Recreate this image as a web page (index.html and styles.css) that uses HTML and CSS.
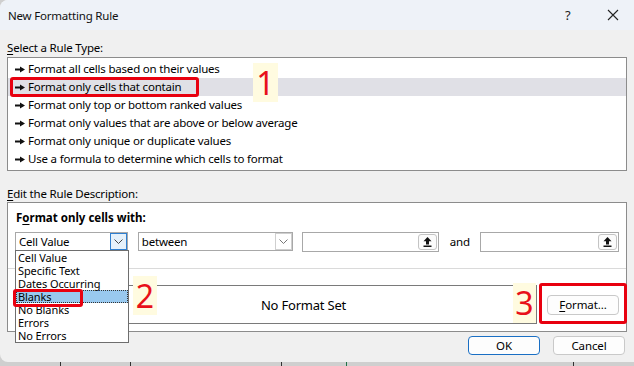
FILE: index.html
```html
<!DOCTYPE html>
<html lang="en">
<head>
  <meta charset="UTF-8" />
  <title>New Formatting Rule</title>
  <link rel="stylesheet" href="styles.css">
</head>
<body>
  <div class="dialog">
    <div class="titlebar">
      <span class="title">New Formatting Rule</span>
      <span class="help">?</span>
      <span class="close">
        <svg width="12" height="12" viewBox="0 0 12 12"><path d="M1 1L11 11M11 1L1 11" stroke="#222" stroke-width="1.1" fill="none"/></svg>
      </span>
    </div>

    <div class="body">
      <div class="section-label"><u>S</u>elect a Rule Type:</div>
      <ul class="rule-list">
        <li><svg class="bullet" viewBox="0 0 10 7"><path d="M0 2.5h5V0.5l5 3-5 3V4.5H0z"/></svg>Format all cells based on their values</li>
        <li class="selected"><svg class="bullet" viewBox="0 0 10 7"><path d="M0 2.5h5V0.5l5 3-5 3V4.5H0z"/></svg>Format only cells that contain</li>
        <li><svg class="bullet" viewBox="0 0 10 7"><path d="M0 2.5h5V0.5l5 3-5 3V4.5H0z"/></svg>Format only top or bottom ranked values</li>
        <li><svg class="bullet" viewBox="0 0 10 7"><path d="M0 2.5h5V0.5l5 3-5 3V4.5H0z"/></svg>Format only values that are above or below average</li>
        <li><svg class="bullet" viewBox="0 0 10 7"><path d="M0 2.5h5V0.5l5 3-5 3V4.5H0z"/></svg>Format only unique or duplicate values</li>
        <li><svg class="bullet" viewBox="0 0 10 7"><path d="M0 2.5h5V0.5l5 3-5 3V4.5H0z"/></svg>Use a formula to determine which cells to format</li>
      </ul>

      <div class="section-label second"><u>E</u>dit the Rule Description:</div>
      <div class="desc">
        <div class="desc-top">
          <div class="desc-heading">F<u>o</u>rmat only cells with:</div>
          <div class="controls">
            <div class="combo combo-type">
              <span class="combo-text">Cell Value</span>
              <span class="drop focused"><svg width="9" height="5" viewBox="0 0 9 5"><path d="M0.5 0.5L4.5 4.5L8.5 0.5" stroke="#444" fill="none"/></svg></span>
            </div>
            <div class="combo combo-op">
              <span class="combo-text">between</span>
              <span class="drop"><svg width="9" height="5" viewBox="0 0 9 5"><path d="M0.5 0.5L4.5 4.5L8.5 0.5" stroke="#777" fill="none"/></svg></span>
            </div>
            <div class="ref-box ref-first">
              <span class="ref-btn"><svg width="9" height="10" viewBox="0 0 9 10"><path d="M4.5 0L8.5 4.2H6V7.4H3V4.2H0.5Z M0.5 8.6h8v1.4h-8z" fill="#111"/></svg></span>
            </div>
            <span class="and">and</span>
            <div class="ref-box ref-second">
              <span class="ref-btn"><svg width="9" height="10" viewBox="0 0 9 10"><path d="M4.5 0L8.5 4.2H6V7.4H3V4.2H0.5Z M0.5 8.6h8v1.4h-8z" fill="#111"/></svg></span>
            </div>
          </div>
        </div>
        <div class="desc-bottom">
          <span class="preview-label">Preview:</span>
          <div class="preview">No Format Set</div>
          <button class="btn format-btn"><u>F</u>ormat...</button>
        </div>
      </div>

      <div class="footer">
        <button class="btn ok-btn">OK</button>
        <button class="btn cancel-btn">Cancel</button>
      </div>
    </div>
  </div>
  <div class="sheet">
    <span class="tick t1"></span>
    <span class="tick t2"></span>
    <span class="tick t3"></span>
    <span class="tick t4 green"></span>
    <span class="tick t5"></span>
  </div>

  <ul class="dropdown">
    <li>Cell Value</li>
    <li>Specific Text</li>
    <li>Dates Occurring</li>
    <li class="hover">Blanks</li>
    <li>No Blanks</li>
    <li>Errors</li>
    <li>No Errors</li>
  </ul>

  <div class="mark mark-1"></div>
  <div class="mark mark-2"></div>
  <div class="mark mark-3"></div>
  <div class="step step-1">1</div>
  <div class="step step-2">2</div>
  <div class="step step-3">3</div>
</body>
</html>
```

FILE: styles.css
```css
body {
  margin: 0;
  width: 634px;
  height: 366px;
  overflow: hidden;
  background-color: #cfcfcf;
  font-family: 'Noto Sans', sans-serif;
  font-size: 11.5px;
  letter-spacing: -0.2px;
  color: #000;
  position: relative;
}

u {
  text-decoration-thickness: 1px;
  text-underline-offset: 2px;
}

.dialog {
  width: 634px;
  height: 362px;
  background-color: #f0f0f0;
  border-radius: 8px 0 0 8px;
  overflow: hidden;
}

.titlebar {
  height: 30px;
  background-color: #eef2f8;
  display: flex;
  align-items: center;
  padding-left: 8px;
}

.title {
  flex: 1;
  color: #111;
}

.help {
  width: 20px;
  font-size: 13px;
  color: #222;
  margin-right: 22px;
}

.close {
  width: 12px;
  height: 12px;
  margin-right: 15px;
}

.body {
  padding: 0 7px;
}

.section-label {
  padding-top: 10px;
  padding-bottom: 1px;
  line-height: 16px;
}

.section-label.second {
  padding-top: 15px;
  padding-bottom: 0;
}

.rule-list {
  list-style: none;
  margin: 0;
  padding: 2px 0 0 0;
  background-color: #fff;
  border: 1px solid #8c8c8c;
  height: 110px;
}

.rule-list li {
  height: 18px;
  line-height: 18px;
  display: flex;
  align-items: center;
  padding-left: 7px;
  white-space: nowrap;
}

.rule-list li.selected {
  background-color: #e0e0e6;
}

.bullet {
  width: 10px;
  height: 7px;
  margin-right: 3px;
  fill: #111;
}

.desc {
  background-color: #fff;
  border: 1px solid #8c8c8c;
  height: 128px;
}

.desc-top {
  padding: 7px 7px 0 7px;
  height: 58px;
  border-bottom: 1px solid #dadada;
}

.desc-heading {
  font-weight: bold;
  letter-spacing: 0;
  line-height: 16px;
  padding-left: 1px;
}

.controls {
  display: flex;
  align-items: center;
  margin-top: 6px;
  height: 19px;
}

.combo {
  height: 19px;
  box-sizing: border-box;
  border: 1px solid #a8a8a8;
  display: flex;
  align-items: center;
  justify-content: space-between;
  padding-left: 3px;
  background-color: #fff;
}

.combo-type {
  width: 113px;
  margin-right: 10px;
}

.combo-op {
  width: 155px;
  margin-right: 9px;
}

.drop {
  width: 17px;
  height: 17px;
  box-sizing: border-box;
  border: 1px solid #cfcfcf;
  display: flex;
  align-items: center;
  justify-content: center;
}

.drop.focused {
  border-color: #2f7fd0;
  background-color: #e5f1fb;
}

.ref-box {
  height: 20px;
  box-sizing: border-box;
  border: 1px solid #a8a8a8;
  background-color: #fff;
  display: flex;
  align-items: center;
  justify-content: flex-end;
  padding-right: 1px;
}

.ref-first {
  width: 138px;
}

.ref-second {
  width: 139px;
}

.ref-btn {
  width: 19px;
  height: 16px;
  box-sizing: border-box;
  border: 1px solid #c4c4c4;
  border-radius: 3px;
  background-color: #fbfbfb;
  display: flex;
  align-items: center;
  justify-content: center;
}

.and {
  width: 41px;
  text-align: center;
}

.desc-bottom {
  display: flex;
  align-items: center;
  padding: 16px 7px 0 8px;
}

.preview-label {
  width: 54px;
}

.preview {
  flex: 1;
  height: 39px;
  box-sizing: border-box;
  border: 1px solid #7a7a7a;
  display: flex;
  align-items: center;
  justify-content: center;
  font-size: 13px;
}

.btn {
  font-family: 'Noto Sans', sans-serif;
  font-size: 11.5px;
  letter-spacing: -0.1px;
  color: #000;
  background-color: #fdfdfd;
  border: 1px solid #c9c9c9;
  border-radius: 4px;
  padding: 0;
}

.format-btn {
  width: 72px;
  height: 20px;
  margin-left: 10px;
}

.footer {
  display: flex;
  justify-content: flex-end;
  gap: 13px;
  margin-top: 4px;
  padding-right: 2px;
}

.ok-btn,
.cancel-btn {
  width: 72px;
  height: 19px;
}

.ok-btn {
  border-color: #1a6fc4;
}

.sheet {
  height: 4px;
  position: relative;
}

.tick {
  position: absolute;
  top: 0;
  width: 1px;
  height: 4px;
  background-color: #333;
}

.t1 { left: 60px; }
.t2 { left: 130px; }
.t3 { left: 281px; }
.t4 { left: 346px; }
.t5 { left: 573px; }
.green { background-color: #217346; }

/* open combo list over the dialog */
.dropdown {
  position: absolute;
  left: 15px;
  top: 250px;
  width: 112px;
  margin: 0;
  padding: 0;
  list-style: none;
  background-color: #fff;
  border: 1px solid #6e6e6e;
  font-size: 11px;
  letter-spacing: -0.1px;
}

.dropdown li {
  height: 13px;
  line-height: 13px;
  padding-left: 2px;
}

.dropdown li.hover {
  background-color: #99c9ef;
  outline: 1px dotted #333;
  outline-offset: -1px;
}

/* annotations */
.mark {
  position: absolute;
  border: 3px solid #e8000f;
  border-radius: 3px;
  box-sizing: border-box;
}

.mark-1 {
  left: 10px;
  top: 77px;
  width: 189px;
  height: 20px;
}

.mark-2 {
  left: 13px;
  top: 289px;
  width: 70px;
  height: 18px;
}

.mark-3 {
  left: 539px;
  top: 283px;
  width: 88px;
  height: 41px;
}

.step {
  position: absolute;
  background-color: #fffbe0;
  color: #e8101a;
  font-size: 32px;
  letter-spacing: 0;
  line-height: 40px;
  text-align: center;
}

.step-1 {
  left: 253px;
  top: 63px;
  width: 25px;
  height: 39px;
}

.step-2 {
  left: 133px;
  top: 276px;
  width: 24px;
  height: 39px;
}

.step-3 {
  left: 513px;
  top: 283px;
  width: 23px;
  height: 40px;
}
```
